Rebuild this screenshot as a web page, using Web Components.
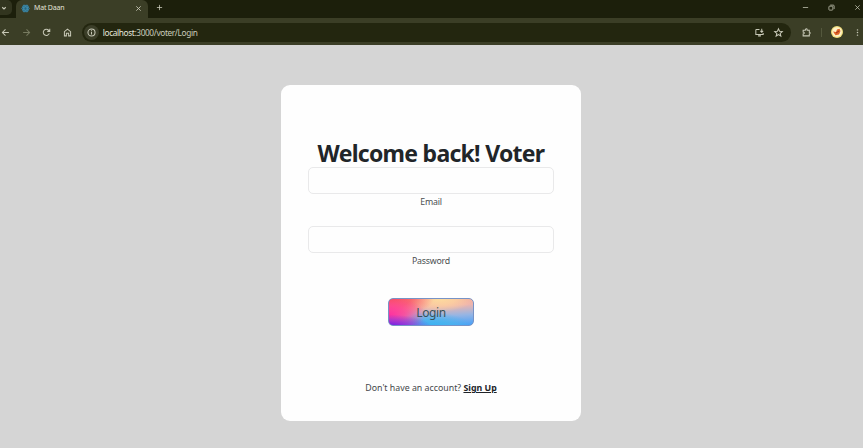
<!DOCTYPE html>
<html lang="en"><head><meta charset="utf-8"><title>Mat Daan</title>
<style>
html,body{margin:0;width:863px;height:448px;overflow:hidden;background:#d5d5d5;font-family:"Noto Sans","Open Sans",sans-serif}
body{display:flex;flex-direction:column}
</style></head><body>
<browser-chrome><tab-item slot="tab">Mat Daan</tab-item><address-bar slot="address">localhost<span>:3000/voter/Login</span></address-bar></browser-chrome>
<login-page>
<login-card heading="Welcome back! Voter">
<form-field label="Email" type="email"></form-field>
<form-field label="Password" type="password"></form-field>
<gradient-button>Login</gradient-button>
<sign-up-line>Don't have an account? <b slot="link">Sign Up</b></sign-up-line>
</login-card>
</login-page>
<script>
function define(name, html, setup){
  customElements.define(name, class extends HTMLElement{
    constructor(){
      super();
      const t=document.createElement('template');
      t.innerHTML=html;
      this.attachShadow({mode:'open'}).append(t.content.cloneNode(true));
    }
    connectedCallback(){ if(setup) setup(this,this.shadowRoot); }
  });
}
const icons={
  down:'<path d="M4.5 6.5 8 10l3.5-3.5"/>',
  close:'<path d="m3 3 10 10m0-10-10 10"/>',
  plus:'<path d="M8 2v12M2 8h12"/>',
  back:'<path d="M14 8H2.5M8 2.5 2.5 8 8 13.5"/>',
  forward:'<path d="M2 8h11.500M8 2.500 13.500 8 8 13.500"/>',
  reload:'<path d="M13 9.500A5.500 5.500 0 1 1 12 4.200L13.500 6M13.800 1.500V6H9.300"/>',
  home:'<path d="M2.500 14V6.500L8 2l5.500 4.500V14H10V9.500H6V14Z"/>',
  info:'<circle cx="8" cy="8" r="6.300"/><path d="M8 7v4.500M8 4.200v1.600"/>',
  install:'<path d="M8 2.500H2.500a1 1 0 0 0-1 1v8h13V9M5.500 14h5M12 1.500v5.500M9.500 5 12 7.500 14.500 5"/>',
  star:'<path d="m8 1.500 1.900 4.400 4.800.4-3.700 3.200 1.200 4.800L8 11.700l-4.200 2.600L5 9.500 1.300 6.300l4.800-.4Z"/>',
  puzzle:'<path d="M2 4h4V3a1.600 1.600 0 0 1 3.200 0v1H13v3.500h.5a1.600 1.600 0 0 1 0 3H13V14H2v-3.300c2.800 0 2.800-3.500 0-3.500Z"/>',
  minus:'<path d="M2 8h12"/>',
  restore:'<rect x="2" y="5" width="9" height="9" rx="1.500"/><path d="M5 2.500h7a2 2 0 0 1 2 2v7"/>',
  dots:'<g fill="currentColor" stroke="none"><circle cx="8" cy="2" r="1.700"/><circle cx="8" cy="8" r="1.700"/><circle cx="8" cy="14" r="1.700"/></g>',
  react:'<circle cx="8" cy="8" r="6.500" fill="#28657c" stroke="none"/><ellipse cx="8" cy="8" rx="7" ry="2.800"/><ellipse cx="8" cy="8" rx="7" ry="2.800" transform="rotate(60 8 8)"/><ellipse cx="8" cy="8" rx="7" ry="2.800" transform="rotate(120 8 8)"/>'
};
define('ui-icon',`<style>:host{display:block;flex:none;width:9px;height:9px;color:#c8c9b7}svg{display:block;width:100%;height:100%;overflow:visible;fill:none;stroke:currentColor;stroke-width:var(--stroke,1.8)}</style><svg viewBox="0 0 16 16"></svg>`,
 (h,r)=>r.querySelector('svg').innerHTML=icons[h.getAttribute('name')]);
define('tab-item',`<style>
:host{display:flex;align-items:center;box-sizing:border-box;width:132px;height:18px;margin-left:4px;padding:0 6px 2px 5px;background:#3b3e26;border-radius:6px 6px 0 0;color:#e2e3d7;font:7px/10px "Noto Sans",sans-serif}
.t{flex:1;margin-left:4px;letter-spacing:-.2px}ui-icon{width:7px;height:7px;--stroke:2}ui-icon.r{width:9px;height:9px;color:#4795b5;--stroke:1}
</style><ui-icon class="r" name="react"></ui-icon><span class="t"><slot></slot></span><ui-icon name="close"></ui-icon>`);
define('address-bar',`<style>
:host{display:flex;align-items:center;box-sizing:border-box;width:709px;height:19px;margin-left:10px;padding:0 8px 0 2px;border-radius:10px;background:#23260f;color:#e5e6dc;font:8.300px/12px "Noto Sans",sans-serif}
.i{display:grid;place-items:center;width:15px;height:15px;border-radius:50%;background:#3b3e28}
.u{flex:1;margin-left:4px;padding-top:1px;letter-spacing:-.38px}::slotted(span){color:#c9cbbb}
.s{margin-left:10px}
</style><div class="i"><ui-icon name="info"></ui-icon></div><span class="u"><slot></slot></span><ui-icon name="install"></ui-icon><ui-icon class="s" name="star"></ui-icon>`);
define('browser-chrome',`<style>
:host{display:block;flex:none;height:45px;background:#3b3e26}
.strip{display:flex;height:18px;background:#1c1f0b;align-items:stretch}
.search{width:12px;height:15px;background:#32351f;border-radius:0 5px 5px 0;display:flex;align-items:center}
.search ui-icon{width:8px;height:8px;--stroke:2.200}
.plus{width:7px;height:7px;margin:4px 0 0 8px}
.win{margin-left:auto;display:flex;padding:4px 2px 0 0;gap:19px}.win ui-icon{width:7px;height:7px;--stroke:1.700}
.bar{display:flex;align-items:center;height:27px;padding:1px 0 0 1px;box-sizing:border-box}
.g{margin-left:11.600px}.g.e{margin-left:11px}.dim{color:#777b60}
.sep{width:1px;height:9px;background:#54583d;margin:0 9px 0 10px}
.p{width:12px;height:12px}.d{width:7px;margin-left:11px}
</style>
<div class="strip"><div class="search"><ui-icon name="down"></ui-icon></div><slot name="tab"></slot><ui-icon class="plus" name="plus"></ui-icon>
<div class="win"><ui-icon name="minus"></ui-icon><ui-icon name="restore"></ui-icon><ui-icon name="close"></ui-icon></div></div>
<div class="bar"><ui-icon name="back"></ui-icon><ui-icon class="g dim" name="forward"></ui-icon><ui-icon class="g" name="reload"></ui-icon><ui-icon class="g" name="home"></ui-icon><slot name="address"></slot><ui-icon class="g e" name="puzzle"></ui-icon><div class="sep"></div>
<svg class="p" viewBox="0 0 12 12"><circle cx="6" cy="6" r="6" fill="#f1df7c"/><circle cx="6" cy="6" r="4.800" fill="#fff2c9"/><path d="M2 5.500 5 6l1-2.500 2.500-.8L9.500 5 8 8.500 4.500 9.200Z" fill="#df6427"/><path d="m5 7 3-2" stroke="#9e2c20"/></svg><ui-icon class="d" name="dots"></ui-icon></div>`);
define('login-page',`<style>:host{display:flex;flex:1;align-items:flex-start;padding:40px 0 0 281px;background:#d5d5d5}</style><slot></slot>`);
define('login-card',`<style>
:host{display:flex;flex-direction:column;align-items:center;box-sizing:border-box;width:300px;height:336px;padding-top:54px;background:#fefefe;border-radius:9px;color:#212529}
h1{margin:0;font:700 23px/28px "Noto Sans","Open Sans",sans-serif;white-space:nowrap;letter-spacing:-.72px}
</style><h1></h1><slot></slot>`,(h,r)=>r.querySelector('h1').textContent=h.getAttribute('heading'));
define('form-field',`<style>
:host{display:flex;flex-direction:column;width:246px;height:59px;align-items:center}
input{box-sizing:border-box;width:100%;height:27px;margin:0;border:1px solid #e9e9ea;border-radius:5px;background:#fefefe;outline:0}
label{font:8.800px/14px "Noto Sans",sans-serif;margin-top:1px;letter-spacing:-.2px;color:#4b4e51}
</style><input id="f"><label for="f"></label>`,(h,r)=>{r.querySelector('label').textContent=h.getAttribute('label');r.querySelector('input').type=h.getAttribute('type');});
define('gradient-button',`<style>
:host{display:block;margin-top:13px}
button{display:block;box-sizing:border-box;width:86px;height:28px;padding:1px 0 0;border:1px solid #7793c6;border-radius:5px;color:#365259;font:12px/25px "Noto Sans",sans-serif;letter-spacing:-.4px;
background:radial-gradient(ellipse 44px 13px at 0 105%,#5a18e8 0,#8c27dfcc 45%,#8c27df00 100%),radial-gradient(ellipse 38px 18px at 0 60%,#ff2fa0 0,#ff409acc 45%,#ff409a00 100%),radial-gradient(ellipse 46px 20px at 0 0,#f84b5c 0,#fa5b68dd 50%,#fa6b6800 100%),radial-gradient(ellipse 42px 15px at 50% 105%,#35b3f4 0,#45b5eecc 50%,#45b5ee00 100%),radial-gradient(ellipse 34px 14px at 60% 0,#fddd9e 0,#fdd3a0cc 50%,#fdc3a000 100%),linear-gradient(176deg,#f7a58e 0,#efb5ad 35%,#96b5e4 65%,#3d9dfa 100%);background-origin:border-box}
</style><button><slot></slot></button>`);
define('sign-up-line',`<style>
:host{display:block;margin-top:55px;font:8.800px/14px "Noto Sans",sans-serif;color:#45484b;white-space:nowrap}
::slotted(b){color:#202328;text-decoration:underline}
</style><slot></slot><slot name="link"></slot>`);
</script></body></html>
